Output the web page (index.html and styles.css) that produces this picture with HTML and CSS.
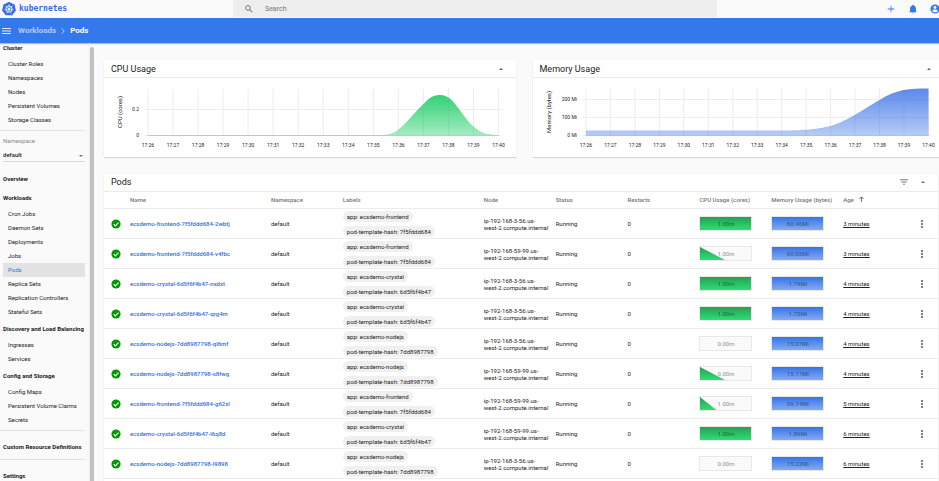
FILE: index.html
```html
<!DOCTYPE html>
<html lang="en">
<head>
	<meta charset="UTF-8" />
	<meta name="viewport" content="width=device-width, initial-scale=1.0" />
	<title>Kubernetes Dashboard</title>
	<link rel="stylesheet" href="styles.css">
</head>
<body>
	<!-- Top Bar -->
	<header class="topbar">
		<a class="brand" href="#">
			<svg class="logo" viewBox="0 0 26 26">
				<polygon points="13,1 22.4,5.5 24.7,15.7 18.2,23.8 7.8,23.8 1.3,15.7 3.6,5.5" fill="#326de6" stroke="#326de6" stroke-width="2" stroke-linejoin="round" />
				<circle cx="13" cy="13" r="5.8" fill="none" stroke="#fff" stroke-width="1.6" />
				<path d="M13 13V4M13 13L19.8 7.5M13 13L21.5 15M13 13L16.9 21M13 13L9.1 21M13 13L4.5 15M13 13L6.2 7.5" stroke="#fff" stroke-width="1.1" />
				<circle cx="13" cy="13" r="1.6" fill="#fff" />
			</svg>
			<span>kubernetes</span>
		</a>
		<div class="search">
			<svg class="search-icon" viewBox="0 0 24 24"><path d="M15.5 14h-.8l-.3-.3A6.5 6.5 0 1 0 13.700 14.400l.3.3v.8l5 5 1.500-1.500-5-5zm-6 0a4.500 4.500 0 1 1 0-9 4.500 4.500 0 0 1 0 9z" /></svg>
			<input type="text" placeholder="Search" aria-label="Search" />
		</div>
		<div class="actions">
			<button type="button" aria-label="Create"><svg viewBox="0 0 24 24"><path d="M20 13h-7v7h-2v-7H4v-2h7V4h2v7h7z" /></svg></button>
			<button type="button" aria-label="Notifications"><svg viewBox="0 0 24 24"><path d="M12 23a2 2 0 0 0 2-2h-4a2 2 0 0 0 2 2zm7-6v-6c0-3.500-2-6-5-6.700V3.500a2 2 0 0 0-4 0v.8C7 5 5 7.500 5 11v6l-2 2v1h18v-1z" /></svg></button>
			<button type="button" aria-label="User"><svg viewBox="0 0 24 24"><path d="M12 1a11 11 0 1 0 0 22 11 11 0 0 0 0-22zm0 4a3.500 3.500 0 1 1 0 7 3.500 3.500 0 0 1 0-7zm0 15c-2.800 0-5.200-1.400-6.600-3.500 0-2.200 4.400-3.400 6.600-3.400s6.600 1.200 6.600 3.400A8 8 0 0 1 12 20z" /></svg></button>
		</div>
	</header>
	<!-- End of Top Bar -->

	<!-- Breadcrumb -->
	<div class="toolbar">
		<button type="button" class="menu-button" aria-label="Menu"><svg viewBox="0 0 18 12"><path d="M0 0h18v2H0zM0 5h18v2H0zM0 10h18v2H0z" /></svg></button>
		<a class="crumb" href="#">Workloads</a>
		<svg class="chevron" viewBox="0 0 8 12"><path d="M1.500 1L6.500 6l-5 5" /></svg>
		<span class="current">Pods</span>
	</div>
	<!-- End of Breadcrumb -->

	<div class="shell">
		<!-- Sidebar -->
		<nav class="sidebar">
			<a class="group first" href="#">Cluster</a>
			<a class="item" href="#">Cluster Roles</a>
			<a class="item" href="#">Namespaces</a>
			<a class="item" href="#">Nodes</a>
			<a class="item" href="#">Persistent Volumes</a>
			<a class="item" href="#">Storage Classes</a>
			<hr />
			<div class="namespace">
				<label for="namespace">Namespace</label>
				<select id="namespace">
					<option>default</option>
				</select>
			</div>
			<a class="group" href="#">Overview</a>
			<a class="group" href="#">Workloads</a>
			<a class="item" href="#">Cron Jobs</a>
			<a class="item" href="#">Daemon Sets</a>
			<a class="item" href="#">Deployments</a>
			<a class="item" href="#">Jobs</a>
			<a class="item active" href="#">Pods</a>
			<a class="item" href="#">Replica Sets</a>
			<a class="item" href="#">Replication Controllers</a>
			<a class="item" href="#">Stateful Sets</a>
			<a class="group" href="#">Discovery and Load Balancing</a>
			<a class="item" href="#">Ingresses</a>
			<a class="item" href="#">Services</a>
			<a class="group" href="#">Config and Storage</a>
			<a class="item" href="#">Config Maps</a>
			<a class="item" href="#">Persistent Volume Claims</a>
			<a class="item" href="#">Secrets</a>
			<hr />
			<a class="group" href="#">Custom Resource Definitions</a>
			<hr />
			<a class="group" href="#">Settings</a>
		</nav>
		<div class="scrollbar"></div>
		<!-- End of Sidebar -->

		<main class="content">
			<!-- Charts -->
			<div class="charts">
				<section class="card">
					<div class="card-header">
						<h2>CPU Usage</h2>
						<button type="button" class="collapse" aria-label="Collapse"></button>
					</div>
					<svg class="chart" id="cpu-chart" viewBox="0 0 412 79">
						<defs>
							<linearGradient id="green" x1="0" y1="0" x2="0" y2="1">
								<stop offset="0" stop-color="#00c752" stop-opacity="0.8" />
								<stop offset="1" stop-color="#00c752" stop-opacity="0.35" />
							</linearGradient>
						</defs>
					</svg>
				</section>
				<section class="card">
					<div class="card-header">
						<h2>Memory Usage</h2>
						<button type="button" class="collapse" aria-label="Collapse"></button>
					</div>
					<svg class="chart" id="memory-chart" viewBox="0 0 412 79">
						<defs>
							<linearGradient id="blue" x1="0" y1="0" x2="0" y2="1">
								<stop offset="0" stop-color="#326de6" stop-opacity="0.8" />
								<stop offset="1" stop-color="#326de6" stop-opacity="0.35" />
							</linearGradient>
						</defs>
					</svg>
				</section>
			</div>
			<!-- End of Charts -->

			<!-- Pod List -->
			<section class="card pods">
				<div class="card-header">
					<h2>Pods</h2>
					<button type="button" class="filter" aria-label="Filter"><svg viewBox="0 0 18 12"><path d="M0 0h18v2H0zM3 5h12v2H3zM7 10h4v2H7z" /></svg></button>
					<button type="button" class="collapse" aria-label="Collapse"></button>
				</div>
				<table>
					<colgroup>
						<col class="col-icon" />
						<col class="col-wide" />
						<col class="col" />
						<col class="col-wide" />
						<col class="col" />
						<col class="col" />
						<col class="col" />
						<col class="col" />
						<col class="col" />
						<col />
						<col class="col-menu" />
					</colgroup>
					<thead>
						<tr>
							<th></th>
							<th>Name</th>
							<th>Namespace</th>
							<th>Labels</th>
							<th>Node</th>
							<th>Status</th>
							<th>Restarts</th>
							<th>CPU Usage (cores)</th>
							<th>Memory Usage (bytes)</th>
							<th>Age <svg class="sort" viewBox="0 0 12 14"><path d="M6 14V2M1 7l5-5 5 5" /></svg></th>
							<th></th>
						</tr>
					</thead>
					<tbody id="pod-list"></tbody>
				</table>
			</section>
			<!-- End of Pod List -->
		</main>
	</div>

	<script src="script.js"></script>
</body>
</html>
```

FILE: styles.css
```css
/* Variables */
:root {
	--primary: #326de6;
	--bar: #3578eb;
	--page: #fafafa;
	--line: #ececec;
	--text: #222;
	--grey: #777;
}
/* End of Variables */

/* Resets */
* {
	margin: 0;
	padding: 0;
	box-sizing: border-box;
	font-family: Roboto, sans-serif;
}

button, input, select {
	appearance: none;
	border: none;
	outline: none;
	background: none;
	color: inherit;
}

button {
	display: block;
	cursor: pointer;
}

a {
	color: inherit;
	text-decoration: none;
}

svg {
	display: block;
}
/* End of Resets */

body {
	display: flex;
	flex-direction: column;
	height: 100vh;
	overflow: hidden;
	background: var(--page);
	color: var(--text);
	font-size: 6px;
	line-height: 8px;
}

/* Top bar */
.topbar {
	display: flex;
	flex: none;
	height: 18px;
}

.brand {
	display: flex;
	align-items: center;
	width: 233px;
	height: 17px;
	padding-left: 2px;
	gap: 3px;
	color: var(--primary);
}

.brand span {
	font: bold 8px "DejaVu Sans Mono", monospace;
}

.logo {
	width: 14px;
	height: 14px;
}

.search {
	display: flex;
	flex: 1;
	align-items: center;
	height: 17px;
	padding-left: 11px;
	gap: 11px;
	background: #eee;
}

.search-icon {
	width: 10px;
	height: 10px;
	fill: #666;
}

.search input {
	flex: 1;
	font-size: 7px;
}

.search input::placeholder {
	color: #757575;
}

.actions {
	display: flex;
	align-items: center;
	justify-content: flex-end;
	width: 222px;
	height: 17px;
	gap: 12px;
	margin-right: -1px;
	margin-left: 1px;
}

.actions svg {
	width: 10px;
	height: 10px;
	fill: var(--bar);
}

/* Breadcrumb */
.toolbar {
	display: flex;
	flex: none;
	align-items: center;
	height: 25px;
	padding-left: 2px;
	background: var(--bar);
	color: #fff;
	font-size: 8px;
	font-weight: 700;
	box-shadow: 0 1px 1px rgba(0, 0, 0, 0.25);
}

.menu-button svg {
	width: 9px;
	height: 6px;
	fill: #fff;
	opacity: 0.85;
}

.crumb {
	margin-left: 7px;
	opacity: 0.6;
}

.chevron {
	width: 4px;
	height: 6px;
	margin: 0 5px;
	fill: none;
	stroke: #fff;
	stroke-width: 2;
	opacity: 0.7;
}

/* Sidebar */
.shell {
	display: flex;
	flex: 1;
	min-height: 0;
}

.sidebar {
	flex: none;
	width: 90px;
	padding: 0 4px 0 3px;
	overflow: hidden;
	border-right: 1px solid #eee;
	white-space: nowrap;
}

.group {
	display: block;
	line-height: 19px;
	font-weight: 700;
}

.group.first {
	margin-top: -5px;
}

.item {
	display: block;
	padding-left: 5px;
	line-height: 14px;
}

.item.active {
	background: #e2e2e2;
	color: var(--primary);
}

.sidebar hr {
	margin: 3px 0 6px -3px;
	border: none;
	border-top: 1px solid #e2e2e2;
}

.namespace {
	position: relative;
	padding-top: 1px;
	margin-bottom: 7px;
}

.namespace::after {
	content: '';
	position: absolute;
	right: 2px;
	bottom: 5px;
	border: 2px solid transparent;
	border-top-color: #777;
	border-bottom: none;
	pointer-events: none;
}

.namespace label {
	display: block;
	line-height: 6px;
	color: #888;
}

.namespace select {
	display: block;
	width: 100%;
	height: 18px;
	padding-top: 3px;
	border-bottom: 1px solid #ddd;
	font-size: 6px;
	font-weight: 500;
}

.scrollbar {
	flex: none;
	width: 4px;
	margin-top: 4px;
	border-radius: 2px 2px 0 0;
	background: #c1c1c1;
}

/* Content */
.content {
	flex: 1;
	min-width: 0;
	padding: 17px 1px 0 10px;
	overflow: hidden;
}

.charts {
	display: grid;
	grid-template-columns: 1fr 1fr;
	gap: 17px;
	margin-right: -6px;
	margin-bottom: 17px;
}

.card {
	background: #fff;
	border-radius: 1px;
	box-shadow: 0 1px 1px rgba(0, 0, 0, 0.16), 0 0 2px rgba(0, 0, 0, 0.06);
}

.card-header {
	display: flex;
	align-items: center;
	height: 18px;
	padding: 0 13px 0 7px;
	border-bottom: 1px solid var(--line);
}

.card-header h2 {
	flex: 1;
	font-size: 9px;
	font-weight: 400;
	line-height: 10px;
}

.collapse {
	border: 2px solid transparent;
	border-top: none;
	border-bottom-color: #666;
}

.filter {
	margin-right: 13px;
}

.filter svg {
	width: 8px;
	height: 6px;
	fill: #777;
}

/* Charts */
.chart {
	width: 100%;
	height: auto;
}

.grid {
	stroke: #ececec;
	stroke-width: 1;
}

.tick {
	font-size: 5px;
	fill: #222;
	text-anchor: middle;
}

.tick.side {
	text-anchor: end;
}

.axis {
	font-size: 6px;
	fill: #222;
	text-anchor: middle;
}

/* Table */
.pods {
	padding-bottom: 24px;
}

table {
	width: 100%;
	table-layout: fixed;
	border-collapse: collapse;
}

.col-icon {
	width: 26px;
}

.col-wide {
	width: 16.9%;
}

.col {
	width: 8.62%;
}

.col-menu {
	width: 32px;
}

th {
	height: 17px;
	border-bottom: 1px solid var(--line);
	font-weight: 500;
	color: var(--grey);
	text-align: left;
	white-space: nowrap;
}

td {
	height: 30px;
	border-bottom: 1px solid var(--line);
	vertical-align: middle;
}

td a {
	font-weight: 500;
	color: var(--primary);
}

.sort {
	display: inline-block;
	width: 5px;
	height: 6px;
	margin-left: 4px;
	fill: none;
	stroke: #555;
	stroke-width: 2;
}

.status-icon {
	width: 10px;
	height: 10px;
	margin-left: 7px;
}

.chips {
	display: flex;
	flex-direction: column;
	align-items: flex-start;
	gap: 4px;
}

.chip {
	padding: 0 4px;
	border-radius: 6px;
	background: #f0f0f0;
	line-height: 11px;
	white-space: nowrap;
}

.node {
	line-height: 7px;
	white-space: nowrap;
}

.spark {
	position: relative;
	width: 53px;
	height: 15px;
	border: 1px solid #e8e8e8;
	background: var(--page);
	line-height: 13px;
	text-align: center;
	color: rgba(0, 0, 0, 0.4);
	font-weight: 500;
}

.spark svg {
	position: absolute;
	inset: 0;
	width: 100%;
	height: 100%;
}

.spark span {
	position: relative;
}

.age {
	text-decoration: underline;
}

.more {
	margin: 0 auto;
}

.more svg {
	width: 2px;
	height: 8px;
	fill: #555;
}
```

FILE: script.js
```javascript
const pods = [
	{ app: 'frontend', hash: '7f5fddd684', id: '2wbtj', node: '3-56', cpu: '1.00m', fill: 'full', memory: '60.46Mi', age: 3 },
	{ app: 'frontend', hash: '7f5fddd684', id: 'v4fbc', node: '59-99', cpu: '1.00m', fill: 'half', memory: '60.02Mi', age: 3 },
	{ app: 'crystal', hash: '6d5f6f4b47', id: 'nxdxt', node: '3-56', cpu: '1.00m', fill: 'full', memory: '1.79Mi', age: 4 },
	{ app: 'crystal', hash: '6d5f6f4b47', id: 'qrg4m', node: '3-56', cpu: '1.00m', fill: 'full', memory: '1.75Mi', age: 4 },
	{ app: 'nodejs', hash: '7dd8987798', id: 'ql6mf', node: '3-56', cpu: '0.00m', fill: 'none', memory: '15.07Mi', age: 4 },
	{ app: 'nodejs', hash: '7dd8987798', id: 's8fwg', node: '59-99', cpu: '0.00m', fill: 'half', memory: '15.17Mi', age: 4 },
	{ app: 'frontend', hash: '7f5fddd684', id: 'g62xl', node: '59-99', cpu: '1.00m', fill: 'third', memory: '59.74Mi', age: 5 },
	{ app: 'crystal', hash: '6d5f6f4b47', id: 'l6q8d', node: '59-99', cpu: '1.00m', fill: 'full', memory: '1.86Mi', age: 6 },
	{ app: 'nodejs', hash: '7dd8987798', id: 'l9898', node: '3-56', cpu: '0.00m', fill: 'none', memory: '15.22Mi', age: 6 }
];

// sparkline outlines in a 53 x 14 box
const shapes = {
	full: '0,0 53,0 53,14 0,14',
	half: '0,0 26,14 0,14',
	third: '0,0 17,14 0,14',
	none: ''
};

function spark(value, shape, from, to, id) {
	return `<div class="spark"><svg viewBox="0 0 53 14" preserveAspectRatio="none">
		<linearGradient id="${id}" x1="0" y1="0" x2="0" y2="1"><stop offset="0" stop-color="${from}" /><stop offset="1" stop-color="${to}" /></linearGradient>
		<polygon points="${shapes[shape]}" fill="url(#${id})" /></svg><span>${value}</span></div>`;
}

document.querySelector('#pod-list').innerHTML = pods.map((pod, i) => `
	<tr>
		<td><svg class="status-icon" viewBox="0 0 24 24"><circle cx="12" cy="12" r="11" fill="#009900" /><path d="M6.500 12.500l4 4 7.500-8" fill="none" stroke="#fff" stroke-width="2.600" /></svg></td>
		<td><a href="#">ecsdemo-${pod.app}-${pod.hash}-${pod.id}</a></td>
		<td>default</td>
		<td><div class="chips"><span class="chip">app: ecsdemo-${pod.app}</span><span class="chip">pod-template-hash: ${pod.hash}</span></div></td>
		<td class="node">ip-192-168-${pod.node}.us-<br />west-2.compute.internal</td>
		<td>Running</td>
		<td>0</td>
		<td>${spark(pod.cpu, pod.fill, '#2c9c54', '#2be075', 'cpu' + i)}</td>
		<td>${spark(pod.memory, 'full', '#3474e8', '#86aaf1', 'mem' + i)}</td>
		<td><span class="age">${pod.age} minutes</span></td>
		<td><button type="button" class="more" aria-label="Actions"><svg viewBox="0 0 4 16"><circle cx="2" cy="2" r="2" /><circle cx="2" cy="8" r="2" /><circle cx="2" cy="14" r="2" /></svg></button></td>
	</tr>`).join('');

function drawChart(selector, chart) {
	const step = (chart.right - chart.left) / 14;
	let out = '';
	for (let i = 0; i <= 14; i++) {
		const x = chart.left + i * step;
		out += `<line class="grid" x1="${x}" x2="${x}" y1="11" y2="58" />`;
		out += `<text class="tick" x="${x}" y="69">17:${26 + i}</text>`;
	}
	chart.ticks.forEach(([label, y]) => {
		out += `<line class="grid" x1="${chart.left - 3}" x2="${chart.right + 3}" y1="${y}" y2="${y}" />`;
		out += `<text class="tick side" x="${chart.left - 9}" y="${y + 2}">${label}</text>`;
	});
	out += `<text class="axis" transform="translate(18 34) rotate(-90)">${chart.label}</text>`;
	out += `<path d="${chart.path}" fill="url(#${chart.fill})" />`;
	document.querySelector(selector).insertAdjacentHTML('beforeend', out);
}

drawChart('#cpu-chart', {
	left: 44,
	right: 395,
	label: 'CPU (cores)',
	ticks: [['0.2', 31.5], ['0', 57.5]],
	fill: 'green',
	path: 'M44 58V57H275C286 57 291 55 295 51.5C305 43 313 32 320 26C325 20 330 17 336 17C341 17 345 19 349 23C357 32 363 43 370 48.5C377 55 384 57 395 57V58Z'
});

drawChart('#memory-chart', {
	left: 53,
	right: 396,
	label: 'Memory (bytes)',
	ticks: [['200 Mi', 21.5], ['100 Mi', 39.5], ['0 Mi', 57.5]],
	fill: 'blue',
	path: 'M53 58V52.5H250C275 52.5 285 51 298 48C308 45 315 41 322 37C331 32 338 27 347 22C355 17 362 14 371 12C379 10.5 387 10.5 396 10.5V58Z'
});
```
